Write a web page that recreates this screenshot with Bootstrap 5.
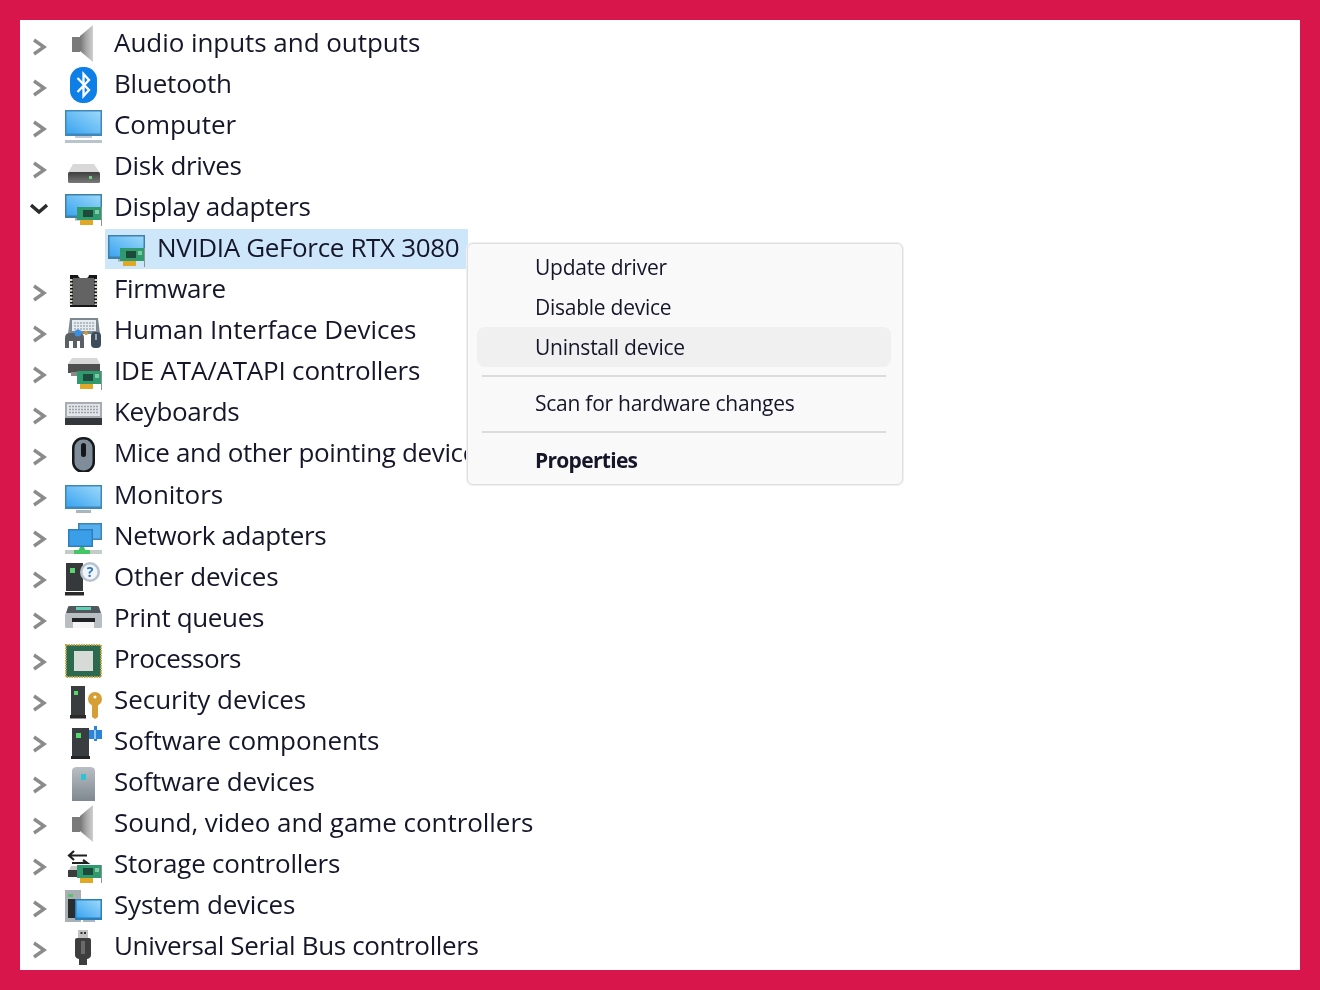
<!DOCTYPE html>
<html lang="en">
<head>
<meta charset="utf-8">
<title>Device Manager</title>
<link href="https://cdn.jsdelivr.net/npm/bootstrap@5.3.0/dist/css/bootstrap.min.css" rel="stylesheet">
<style>
html,body{height:100%}
body{background:#d9164b;padding:20px;overflow:hidden;font-family:"Open Sans","Noto Sans",sans-serif;color:#16162a}
.dm-panel{height:950px;background:#fff;overflow:hidden;padding:3px 0 0 10px}
.dm-list{filter:blur(.35px)}
.dm-row{height:41.05px;font-size:26px;line-height:1;white-space:nowrap;letter-spacing:-.35px}
.dm-row span{margin-bottom:3px}
.dm-wide{letter-spacing:-.05px}
.dm-mid{letter-spacing:-.2px}
.dm-tight{letter-spacing:-.55px}
.dm-chev{width:18px;height:18px;margin:6px 17px 0 0;flex:none;fill:none;stroke:#8b8b8b;stroke-width:3.4}
.dm-chev-open{stroke:#2c2c2c}
.dm-ico{width:37px;height:37px;flex:none;margin-right:12px;overflow:visible}
.dm-child{margin-left:75px;padding-left:3px;width:363px;height:40px;margin-top:.5px;margin-bottom:.55px;background:#cde6f9}
.dm-menu{display:block;top:223px;left:447px;width:436px;height:242px;background:#f9f9f9;border:1px solid #e0e0e0;box-shadow:0 0 0 1px #efefef;border-radius:6px;padding:3px 0 0;font-size:21px;letter-spacing:-.25px;--bs-dropdown-min-width:0;filter:blur(.3px)}
.dm-item{height:40px;margin:0 11px 0 9px;width:auto;padding:0 0 0 58px;display:flex;align-items:center;border-radius:8px;color:#16162a;line-height:1;white-space:nowrap;background:transparent}
.dm-item-on{background:#f0f0f0}
.dm-sep{margin:8px 16px 6px 14px;border-top:2px solid #dcdcdc;opacity:1}
.dm-sep-b{margin-bottom:7px}
.dm-strong{font-weight:700;letter-spacing:-.7px}
</style>
</head>
<body>
<svg width="0" height="0" class="d-block">
<defs>
<linearGradient id="gS" x1="0" x2="1" y1="0" y2="0"><stop offset="0" stop-color="#757575"/><stop offset=".5" stop-color="#a9a9a9"/><stop offset="1" stop-color="#cfcfcf"/></linearGradient>
<linearGradient id="gB" x1="0" x2="1" y1="1" y2="0"><stop offset="0" stop-color="#3aa4f0"/><stop offset="1" stop-color="#9bd8fa"/></linearGradient>
<linearGradient id="gT" x1="0" x2="0" y1="0" y2="1"><stop offset="0" stop-color="#b9bec4"/><stop offset="1" stop-color="#7f8890"/></linearGradient>
<linearGradient id="gD" x1="0" x2="0" y1="0" y2="1"><stop offset="0" stop-color="#3d3d3d"/><stop offset="1" stop-color="#7a7a7a"/></linearGradient>
<symbol id="card" viewBox="0 0 25 19" overflow="visible">
<rect x="0" y="0" width="24" height="13" fill="#2f9a6e"/><rect x="6" y="3" width="10" height="7" fill="#1d4a3a"/><rect x="18" y="3" width="4" height="4" fill="#7fc8a6"/>
<rect x="3" y="13" width="13" height="5" fill="#e0a825"/><rect x="24" y="0" width="1" height="19" fill="#8d9296"/>
</symbol>
<symbol id="speaker" viewBox="0 0 37 37"><rect x="7" y="12" width="8" height="15" fill="#7a7a7a"/><path d="M15 11 28 0v37L15 26z" fill="url(#gS)"/></symbol>
<symbol id="bluetooth" viewBox="0 0 37 37"><rect x="5" y="1" width="27" height="36" rx="12.5" fill="#0d7fe6"/><path d="M12.500 12 24 24l-5.500 6V8L24 14 12.500 26" fill="none" stroke="#fff" stroke-width="2.300"/></symbol>
<symbol id="computer" viewBox="0 0 37 37"><rect x="0" y="3" width="37" height="26" fill="#3f87b8"/><rect x="1.500" y="4.500" width="34" height="22" fill="url(#gB)"/><rect x="10" y="29" width="17" height="2" fill="#c3ccd2"/><rect x="0" y="33" width="37" height="3" fill="#b9c3ca"/></symbol>
<symbol id="disk" viewBox="0 0 37 37"><path d="M8 16h21l6 9H3z" fill="#d8d8d8"/><rect x="3" y="24" width="32" height="11" rx="1.500" fill="url(#gD)"/><rect x="24" y="28" width="3" height="3" fill="#6fd08c"/></symbol>
<symbol id="display" viewBox="0 0 37 37"><rect x="0" y="5" width="37" height="24" fill="#3f7fa8"/><rect x="1.500" y="6.500" width="34" height="20" fill="url(#gB)"/><rect x="10" y="29" width="8" height="2.500" fill="#9fb0bb"/><use href="#card" x="12" y="18" width="25" height="19"/></symbol>
<symbol id="firmware" viewBox="0 0 37 37"><path d="M5 4h8a5 3.500 0 0 0 11 0h8v32H5z" fill="#161616"/><rect x="8" y="7" width="21" height="27" fill="#636363"/><path d="M6 8v26M31 8v26" stroke="#dcdcd0" stroke-width="3" stroke-dasharray="2 1.500"/></symbol>
<symbol id="hid" viewBox="0 0 37 37"><path d="M5 6h28l2 16H3z" fill="#7d8891"/><rect x="7" y="8" width="24" height="11" fill="#e6ebf0"/><path d="M9 11h20M9 14h20M9 17h20" stroke="#a4adb5" stroke-width="1.500" stroke-dasharray="2 1"/><path d="M0 36V26q0-5 5-5h9q5 0 5 5v10h-4v-7h-3v7H8v-7H4v7z" fill="#5a5f64"/><circle cx="13" cy="21" r="3.500" fill="#3a8fe0"/><circle cx="21" cy="21" r="2" fill="#c99a3a"/><rect x="26" y="20" width="10" height="16" rx="4" fill="#3d4c5a"/><rect x="30" y="22" width="2" height="6" fill="#9aa7b2"/></symbol>
<symbol id="ide" viewBox="0 0 37 37"><path d="M7 5h25l3 6H3z" fill="#d8d8d8"/><rect x="3" y="11" width="32" height="9" fill="#4f4f4f"/><rect x="6" y="19" width="9" height="4" fill="#8a8a8a"/><use href="#card" x="12" y="18" width="25" height="19"/></symbol>
<symbol id="keyboard" viewBox="0 0 37 37"><rect x="0" y="8" width="37" height="16" fill="#a7acb1"/><rect x="2" y="10" width="33" height="12" fill="#e2e6ea"/><path d="M4 12.500h29M4 15.500h29M4 18.500h29" stroke="#9ba1a7" stroke-width="1.500" stroke-dasharray="2 1"/><rect x="0" y="24" width="37" height="7" fill="#33373b"/></symbol>
<symbol id="mouse" viewBox="0 0 37 37"><rect x="7" y="2" width="23" height="36" rx="11" fill="#17181a"/><rect x="9.500" y="4.500" width="18" height="31" rx="8.500" fill="#7f8d9a"/><rect x="16" y="8" width="5" height="14" rx="2.500" fill="#15171a"/></symbol>
<symbol id="monitor" viewBox="0 0 37 37"><rect x="0" y="8" width="37" height="24" fill="#3f87b8"/><rect x="1.500" y="9.500" width="34" height="20" fill="url(#gB)"/><rect x="11" y="33" width="15" height="3" fill="#a9b6bf"/></symbol>
<symbol id="network" viewBox="0 0 37 37"><rect x="13" y="5" width="24" height="17" fill="#3c82b3"/><rect x="14.500" y="6.500" width="21" height="14" fill="#58afec"/><rect x="3" y="11" width="25" height="18" fill="#2d7ec0"/><rect x="4.500" y="12.500" width="22" height="15" fill="#3a9fe8"/><rect x="0" y="32" width="37" height="4" fill="#c3ccc6"/><path d="M12 36l3-7h4l3 7z" fill="#3fc25f"/><rect x="9" y="32" width="16" height="4" fill="#44c566"/></symbol>
<symbol id="other" viewBox="0 0 37 37"><rect x="1" y="4" width="17" height="28" fill="#35393c"/><rect x="5" y="9" width="5" height="5" fill="#59d56f"/><rect x="0" y="33" width="19" height="3.500" fill="#2a2a2a"/><circle cx="25" cy="13" r="10" fill="#b8c2cc"/><circle cx="25" cy="13" r="7.500" fill="#f2f5f8"/><text x="25" y="18" text-anchor="middle" font-family="Open Sans,sans-serif" font-size="14" font-weight="700" fill="#2a75c8">?</text></symbol>
<symbol id="printer" viewBox="0 0 37 37"><path d="M3 7q0-1 2-1h27q2 0 2 1l2 6H1z" fill="#50585e"/><rect x="11" y="7" width="15" height="3" fill="#5fd0b6"/><rect x="0" y="13" width="37" height="15" rx="1.500" fill="#b9bec2"/><rect x="7" y="18" width="23" height="4" fill="#1f2124"/><rect x="8" y="22" width="21" height="6" fill="#f5f5f5"/></symbol>
<symbol id="cpu" viewBox="0 0 37 37"><rect x="1" y="4" width="35" height="32" fill="#2c6a50" stroke="#bfa542" stroke-width="2" stroke-dasharray="1.500 1"/><rect x="9" y="10" width="19" height="20" fill="#d6dbd8"/></symbol>
<symbol id="security" viewBox="0 0 37 37"><rect x="6" y="4" width="14" height="29" fill="#3a3d3f"/><rect x="9" y="9" width="4" height="4" fill="#55d56a"/><rect x="5" y="33" width="16" height="3.500" fill="#2a2a2a"/><circle cx="30" cy="17" r="7" fill="#d69f35"/><circle cx="30" cy="15" r="1.500" fill="#fff"/><path d="M27 21h6v14l-3 2-3-2z" fill="#d69f35"/></symbol>
<symbol id="swcomp" viewBox="0 0 37 37"><rect x="7" y="5" width="17" height="28" fill="#3a3d3f"/><rect x="11" y="10" width="5" height="5" fill="#4fdc6d"/><rect x="6" y="33" width="19" height="3" fill="#242424"/><path d="M24 7h5V3h3v4h5v9H32v2h-3v-2h-5z" fill="#2b84d6"/><path d="M30 7v9" stroke="#bcdcf5" stroke-width="1.500"/></symbol>
<symbol id="swdev" viewBox="0 0 37 37"><path d="M7 7q0-4 5-4h13q5 0 5 4v30H7z" fill="url(#gT)"/><rect x="16" y="10" width="5" height="6" fill="#2fc2d0"/></symbol>
<symbol id="storage" viewBox="0 0 37 37"><path d="M9 5 4 9.500l5 4.500M4 9.500h18M7 17h15l-4-3" fill="none" stroke="#202020" stroke-width="2.200"/><path d="M6 20h15l2 4H4z" fill="#c9c9c9"/><rect x="3" y="24" width="22" height="7" fill="#3d3d3d"/><use href="#card" x="12" y="19" width="25" height="19"/></symbol>
<symbol id="system" viewBox="0 0 37 37"><rect x="0" y="3" width="16" height="32" fill="#a9b0b4"/><rect x="3" y="12" width="9" height="19" fill="#2a2d30"/><rect x="3" y="7" width="5" height="3" fill="#58c070"/><rect x="10" y="12" width="27" height="21" fill="#2b7fb8"/><rect x="11.500" y="13.500" width="24" height="17" fill="url(#gB)"/><rect x="18" y="33" width="12" height="2" fill="#a9b6bf"/></symbol>
<symbol id="usb" viewBox="0 0 37 37"><rect x="13" y="2" width="10" height="9" fill="#c3c3c3"/><rect x="15.500" y="4" width="2" height="2" fill="#333"/><rect x="19" y="4" width="2" height="2" fill="#333"/><path d="M10 12q0-2 2-2h12q2 0 2 2v15q0 3-4 4v7h-8v-7q-4-1-4-4z" fill="#3e3e3e"/><rect x="16" y="13" width="4" height="13" fill="#6a6a6a"/></symbol>
</defs>
</svg>

<main class="dm-panel position-relative">
<ul class="list-unstyled m-0 dm-list">
<li class="dm-row dm-wide d-flex align-items-center"><svg class="dm-chev" viewBox="0 0 18 18"><path d="M4 2l10 7-10 7"/></svg><svg class="dm-ico"><use href="#speaker"/></svg><span>Audio inputs and outputs</span></li>
<li class="dm-row dm-mid d-flex align-items-center"><svg class="dm-chev" viewBox="0 0 18 18"><path d="M4 2l10 7-10 7"/></svg><svg class="dm-ico"><use href="#bluetooth"/></svg><span>Bluetooth</span></li>
<li class="dm-row dm-wide d-flex align-items-center"><svg class="dm-chev" viewBox="0 0 18 18"><path d="M4 2l10 7-10 7"/></svg><svg class="dm-ico"><use href="#computer"/></svg><span>Computer</span></li>
<li class="dm-row d-flex align-items-center"><svg class="dm-chev" viewBox="0 0 18 18"><path d="M4 2l10 7-10 7"/></svg><svg class="dm-ico"><use href="#disk"/></svg><span>Disk drives</span></li>
<li class="dm-row d-flex align-items-center"><svg class="dm-chev dm-chev-open" viewBox="0 0 18 18"><path d="M1 3l8 7 8-7"/></svg><svg class="dm-ico"><use href="#display"/></svg><span>Display adapters</span></li>
<li class="dm-row dm-child d-flex align-items-center"><svg class="dm-ico"><use href="#display"/></svg><span>NVIDIA GeForce RTX 3080</span></li>
<li class="dm-row d-flex align-items-center"><svg class="dm-chev" viewBox="0 0 18 18"><path d="M4 2l10 7-10 7"/></svg><svg class="dm-ico"><use href="#firmware"/></svg><span>Firmware</span></li>
<li class="dm-row dm-wide d-flex align-items-center"><svg class="dm-chev" viewBox="0 0 18 18"><path d="M4 2l10 7-10 7"/></svg><svg class="dm-ico"><use href="#hid"/></svg><span>Human Interface Devices</span></li>
<li class="dm-row dm-mid d-flex align-items-center"><svg class="dm-chev" viewBox="0 0 18 18"><path d="M4 2l10 7-10 7"/></svg><svg class="dm-ico"><use href="#ide"/></svg><span>IDE ATA/ATAPI controllers</span></li>
<li class="dm-row d-flex align-items-center"><svg class="dm-chev" viewBox="0 0 18 18"><path d="M4 2l10 7-10 7"/></svg><svg class="dm-ico"><use href="#keyboard"/></svg><span>Keyboards</span></li>
<li class="dm-row d-flex align-items-center"><svg class="dm-chev" viewBox="0 0 18 18"><path d="M4 2l10 7-10 7"/></svg><svg class="dm-ico"><use href="#mouse"/></svg><span>Mice and other pointing devices</span></li>
<li class="dm-row dm-wide d-flex align-items-center"><svg class="dm-chev" viewBox="0 0 18 18"><path d="M4 2l10 7-10 7"/></svg><svg class="dm-ico"><use href="#monitor"/></svg><span>Monitors</span></li>
<li class="dm-row d-flex align-items-center"><svg class="dm-chev" viewBox="0 0 18 18"><path d="M4 2l10 7-10 7"/></svg><svg class="dm-ico"><use href="#network"/></svg><span>Network adapters</span></li>
<li class="dm-row dm-mid d-flex align-items-center"><svg class="dm-chev" viewBox="0 0 18 18"><path d="M4 2l10 7-10 7"/></svg><svg class="dm-ico"><use href="#other"/></svg><span>Other devices</span></li>
<li class="dm-row d-flex align-items-center"><svg class="dm-chev" viewBox="0 0 18 18"><path d="M4 2l10 7-10 7"/></svg><svg class="dm-ico"><use href="#printer"/></svg><span>Print queues</span></li>
<li class="dm-row dm-tight d-flex align-items-center"><svg class="dm-chev" viewBox="0 0 18 18"><path d="M4 2l10 7-10 7"/></svg><svg class="dm-ico"><use href="#cpu"/></svg><span>Processors</span></li>
<li class="dm-row dm-wide d-flex align-items-center"><svg class="dm-chev" viewBox="0 0 18 18"><path d="M4 2l10 7-10 7"/></svg><svg class="dm-ico"><use href="#security"/></svg><span>Security devices</span></li>
<li class="dm-row dm-wide d-flex align-items-center"><svg class="dm-chev" viewBox="0 0 18 18"><path d="M4 2l10 7-10 7"/></svg><svg class="dm-ico"><use href="#swcomp"/></svg><span>Software components</span></li>
<li class="dm-row dm-mid d-flex align-items-center"><svg class="dm-chev" viewBox="0 0 18 18"><path d="M4 2l10 7-10 7"/></svg><svg class="dm-ico"><use href="#swdev"/></svg><span>Software devices</span></li>
<li class="dm-row dm-wide d-flex align-items-center"><svg class="dm-chev" viewBox="0 0 18 18"><path d="M4 2l10 7-10 7"/></svg><svg class="dm-ico"><use href="#speaker"/></svg><span>Sound, video and game controllers</span></li>
<li class="dm-row dm-mid d-flex align-items-center"><svg class="dm-chev" viewBox="0 0 18 18"><path d="M4 2l10 7-10 7"/></svg><svg class="dm-ico"><use href="#storage"/></svg><span>Storage controllers</span></li>
<li class="dm-row dm-mid d-flex align-items-center"><svg class="dm-chev" viewBox="0 0 18 18"><path d="M4 2l10 7-10 7"/></svg><svg class="dm-ico"><use href="#system"/></svg><span>System devices</span></li>
<li class="dm-row d-flex align-items-center"><svg class="dm-chev" viewBox="0 0 18 18"><path d="M4 2l10 7-10 7"/></svg><svg class="dm-ico"><use href="#usb"/></svg><span>Universal Serial Bus controllers</span></li>
</ul>

<div class="dropdown-menu show dm-menu">
<a class="dropdown-item dm-item" href="#">Update driver</a>
<a class="dropdown-item dm-item" href="#">Disable device</a>
<a class="dropdown-item dm-item dm-item-on" href="#">Uninstall device</a>
<hr class="dropdown-divider dm-sep">
<a class="dropdown-item dm-item" href="#">Scan for hardware changes</a>
<hr class="dropdown-divider dm-sep dm-sep-b">
<a class="dropdown-item dm-item dm-strong" href="#">Properties</a>
</div>
</main>
<script src="https://cdn.jsdelivr.net/npm/bootstrap@5.3.0/dist/js/bootstrap.bundle.min.js"></script>
</body>
</html>
